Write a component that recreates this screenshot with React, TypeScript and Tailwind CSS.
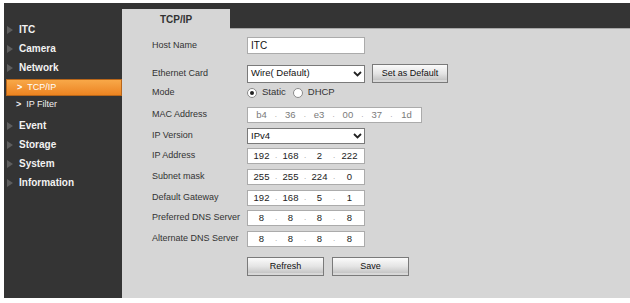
import { ReactNode } from "react";

const menu = [
  { label: "ITC" },
  { label: "Camera" },
  { label: "Network" },
];

const menuAfter = ["Event", "Storage", "System", "Information"];

const Triangle = () => (
  <svg width="6" height="8" viewBox="0 0 6 8" className="shrink-0">
    <polygon points="0,0 6,4 0,8" fill="#5e5e5e" />
  </svg>
);

const Chevron = () => (
  <svg width="9" height="6" viewBox="0 0 9 6" className="shrink-0">
    <polyline points="1,1 4.5,4.5 8,1" fill="none" stroke="#222" strokeWidth="1.8" />
  </svg>
);

const MenuItem = ({ label }: { label: string }) => (
  <div className="flex items-center h-[19px] pl-[3px] gap-[6px]">
    <Triangle />
    <span className="text-[10px] font-bold text-[#f2f2f2]">{label}</span>
  </div>
);

const Row = ({ label, children, className = "" }: { label: string; children?: ReactNode; className?: string }) => (
  <div className={`flex items-center ${className}`}>
    <div className="w-[95px] text-[9px] text-[#333] shrink-0">{label}</div>
    {children}
  </div>
);

const Octets = ({ values, width, muted }: { values: string[]; width: string; muted?: boolean }) => (
  <div className={`flex items-center h-[16px] bg-white border border-[#ababab] ${width}`}>
    {values.map((v, i) => (
      <div key={i} className="flex flex-1 items-center">
        <span className={`flex-1 text-center text-[9.5px] ${muted ? "text-[#7a7a7a]" : "text-[#222]"}`}>{v}</span>
        {i < values.length - 1 && <span className="text-[8px] text-[#999] w-[2px] leading-none">.</span>}
      </div>
    ))}
  </div>
);

const Button = ({ children, className = "" }: { children: ReactNode; className?: string }) => (
  <button
    className={`h-[19px] border border-[#7a7a7a] bg-gradient-to-b from-[#fbfbfb] via-[#e4e4e4] to-[#bcbcbc] text-[9px] text-[#111] shadow-[inset_0_-2px_0_#d8d8d8] ${className}`}
  >
    {children}
  </button>
);

const Radio = ({ checked }: { checked?: boolean }) => (
  <span className="w-[10px] h-[10px] rounded-full border border-[#8a8a8a] bg-white flex items-center justify-center shrink-0">
    {checked && <span className="w-[4px] h-[4px] rounded-full bg-[#222]" />}
  </span>
);

export default function App() {
  return (
    <div className="w-[630px] h-[303px] bg-white pt-[3px] pl-[4px] font-['Liberation_Sans',Arial,sans-serif]">
      <div className="flex h-[295px]">
        {/* Sidebar */}
        <aside className="w-[118px] bg-[#343434] flex flex-col pt-[17px]">
          {menu.map((m) => (
            <MenuItem key={m.label} label={m.label} />
          ))}
          <div className="ml-[2px] mt-[2px] h-[17px] border border-[#b8661a] bg-gradient-to-b from-[#f8a848] to-[#ec8420] flex items-center pl-[10px] gap-[5px] text-white">
            <span className="text-[9px] font-bold">&gt;</span>
            <span className="text-[9px]">TCP/IP</span>
          </div>
          <div className="h-[17px] flex items-center pl-[12px] gap-[5px] text-[#f2f2f2]">
            <span className="text-[9px] font-bold">&gt;</span>
            <span className="text-[9px]">IP Filter</span>
          </div>
          <div className="mt-[3px]">
            {menuAfter.map((m) => (
              <MenuItem key={m} label={m} />
            ))}
          </div>
        </aside>

        {/* Main */}
        <main className="flex-1 flex flex-col">
          <div className="h-[26px] bg-[#343434] flex items-end border-b border-[#a6a6a6]">
            <div className="w-[108px] h-[20px] bg-[#d6d6d6] flex items-center justify-center text-[10px] font-bold text-[#333] -mb-px">
              TCP/IP
            </div>
          </div>
          <div className="flex-1 bg-[#d6d6d6] pl-[30px] pt-[8px] flex flex-col">
            <Row label="Host Name" className="h-[17px]">
              <div className="w-[118px] h-[17px] bg-white border border-[#ababab] flex items-center px-[3px] text-[10px] text-[#111]">
                ITC
              </div>
            </Row>
            <Row label="Ethernet Card" className="h-[19px] mt-[10px]">
              <div className="w-[118px] h-[18px] bg-white border border-[#7a7a7a] flex items-center justify-between pl-[3px] pr-[2px] text-[9.5px] text-[#111]">
                <span>Wire( Default)</span>
                <Chevron />
              </div>
              <Button className="ml-[7px] w-[76px]">Set as Default</Button>
            </Row>
            <Row label="Mode" className="h-[15px] mt-[2px]">
              <div className="flex items-center text-[9.5px] text-[#333]">
                <Radio checked />
                <span className="ml-[5px]">Static</span>
                <span className="ml-[7px]"><Radio /></span>
                <span className="ml-[5px]">DHCP</span>
              </div>
            </Row>
            <Row label="MAC Address" className="h-[16px] mt-[7px]">
              <Octets values={["b4", "36", "e3", "00", "37", "1d"]} width="w-[175px]" muted />
            </Row>
            <Row label="IP Version" className="h-[16px] mt-[5px]">
              <div className="w-[118px] h-[16px] bg-white border border-[#7a7a7a] flex items-center justify-between pl-[3px] pr-[2px] text-[9.5px] text-[#111]">
                <span>IPv4</span>
                <Chevron />
              </div>
            </Row>
            <Row label="IP Address" className="h-[16px] mt-[4px]">
              <Octets values={["192", "168", "2", "222"]} width="w-[118px]" />
            </Row>
            <Row label="Subnet mask" className="h-[16px] mt-[5px]">
              <Octets values={["255", "255", "224", "0"]} width="w-[118px]" />
            </Row>
            <Row label="Default Gateway" className="h-[16px] mt-[5px]">
              <Octets values={["192", "168", "5", "1"]} width="w-[118px]" />
            </Row>
            <Row label="Preferred DNS Server" className="h-[16px] mt-[4px]">
              <Octets values={["8", "8", "8", "8"]} width="w-[118px]" />
            </Row>
            <Row label="Alternate DNS Server" className="h-[16px] mt-[5px]">
              <Octets values={["8", "8", "8", "8"]} width="w-[118px]" />
            </Row>
            <div className="flex mt-[10px] pl-[95px] gap-[8px]">
              <Button className="w-[77px]">Refresh</Button>
              <Button className="w-[77px]">Save</Button>
            </div>
          </div>
        </main>
      </div>
    </div>
  );
}
